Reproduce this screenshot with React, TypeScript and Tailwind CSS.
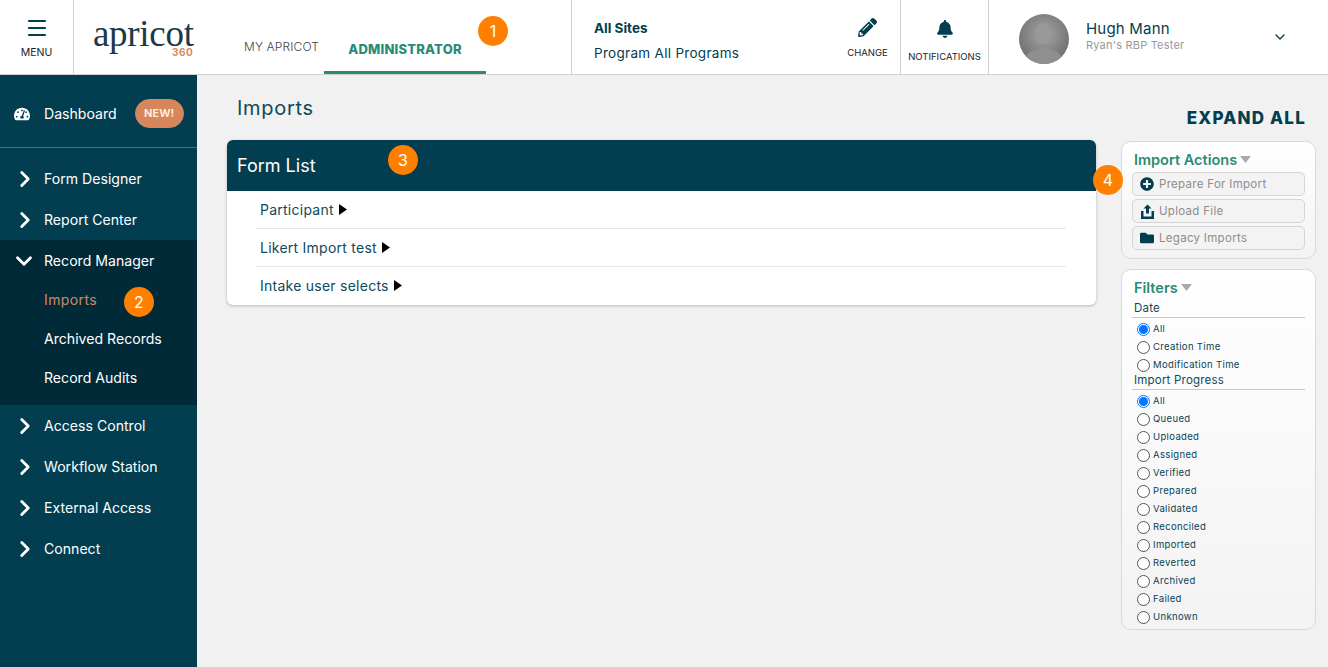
import React from "react";
import { ChevronRight, ChevronDown, Menu } from "lucide-react";
import { FaPencilAlt, FaBell, FaPlusCircle, FaFolder, FaTachometerAlt } from "react-icons/fa";

const Badge = ({ n, className }: { n: number; className: string }) => (
  <span className={`absolute flex h-[30px] w-[30px] items-center justify-center rounded-full bg-[#ff7f00] text-[16px] text-white ${className}`}>{n}</span>
);

const NavItem = ({ label, open }: { label: string; open?: boolean }) => (
  <div className="flex h-[41px] items-center text-[14.1px] text-white">
    <span className="flex w-[44px] justify-center pl-[6px]">
      {open ? <ChevronDown size={26} strokeWidth={2.6} className="-ml-[2px]" /> : <ChevronRight size={26} strokeWidth={2.6} />}
    </span>
    <span>{label}</span>
  </div>
);

const Radio = ({ label, checked }: { label: string; checked?: boolean }) => (
  <label className="flex h-[18px] items-center pl-[5px] text-[9.5px] tracking-[0.35px] text-[#0a4252]">
    <span className={`mr-[3px] flex h-[13px] w-[13px] items-center justify-center rounded-full border ${checked ? "border-[#0075ff]" : "border-[#555]"} bg-white`}>
      {checked && <span className="h-[9px] w-[9px] rounded-full bg-[#0075ff]" />}
    </span>
    {label}
  </label>
);

const ActionButton = ({ icon, label }: { icon: React.ReactNode; label: string }) => (
  <div className="flex h-[24px] items-center rounded-[5px] border border-[#d5d5d5] bg-[#f3f3f3] pl-[7px] text-[11.5px] tracking-[0.3px] text-[#8d8d8d]">
    <span className="flex w-[19px] items-center text-[#023e50]">{icon}</span>
    <span className="pt-[2px]">{label}</span>
  </div>
);

const Tri = ({ className }: { className: string }) => (
  <svg width="8" height="11" viewBox="0 0 8 11" className={className} fill="currentColor">
    <path d="M0 0l8 5.5L0 11z" />
  </svg>
);

const TriDown = () => (
  <svg width="11" height="7" viewBox="0 0 11 7" className="ml-[3px] text-[#aaa]" fill="currentColor">
    <path d="M0 0h11L5.5 7z" />
  </svg>
);

const FormRow = ({ label, last }: { label: string; last?: boolean }) => (
  <div className={`ml-[29px] mr-[30px] flex h-[38px] items-center pl-[4px] text-[14px] tracking-[0.25px] text-[#10495b] ${last ? "pb-[1px]" : "border-b border-[#e8e8e8]"}`}>
    {label}
    <Tri className="ml-[5px] text-black" />
  </div>
);

export default function App() {
  const font = { fontFamily: "Inter, 'Liberation Sans', sans-serif" };
  return (
    <div className="flex h-[667px] w-[1328px] flex-col overflow-hidden bg-[#f1f1f1] font-['Inter',sans-serif]" style={font}>
      <header className="relative flex h-[75px] shrink-0 border-b border-[#d2d2d2] bg-white">
        <div className="flex w-[74px] flex-col items-center border-r border-[#d2d2d2] pt-[16px] text-[#023e50]">
          <Menu size={24} strokeWidth={2.2} />
          <span className="mt-[5px] text-[10.5px] text-[#222]">MENU</span>
        </div>
        <div className="relative w-[170px] pl-[19px] pt-[22px] font-['Liberation_Serif',serif] text-[37px] leading-[24px] tracking-[-0.3px] text-[#1c3a45]">
          apricot
          <span className="absolute left-[98px] top-[46px] font-['Inter',sans-serif] text-[10px] font-bold leading-[12px] tracking-[0.5px] text-[#d88a62]">360</span>
        </div>
        <div className="flex h-[74px] w-[327px] items-end">
          <div className="w-[80px] pb-[18px] text-[12px] font-light tracking-[0.15px] text-[#444]">MY APRICOT</div>
          <div className="flex h-[37px] w-[162px] items-start justify-center border-b-[3px] border-[#2a8a78] pt-[3px] text-[13px] font-extrabold tracking-[0.2px] text-[#2a8a78]">ADMINISTRATOR</div>
          <Badge n={1} className="left-[478px] top-[16px]" />
        </div>
        <div className="flex w-[329px] border-l border-[#d2d2d2]">
          <div className="flex-1 pl-[22px] pt-[18px] text-[#023e50]">
            <div className="text-[13.5px] font-bold leading-[20px]">All Sites</div>
            <div className="mt-[5px] text-[13.5px] leading-[20px] tracking-[0.3px]">Program All Programs</div>
          </div>
          <div className="flex w-[65px] flex-col items-center pt-[18px] text-[#023e50]">
            <FaPencilAlt className="text-[19px]" />
            <span className="mt-[9px] text-[9.5px] text-[#222]">CHANGE</span>
          </div>
        </div>
        <div className="flex w-[88px] flex-col items-center border-l border-[#d2d2d2] pt-[20px] text-[#023e50]">
          <FaBell className="text-[18px]" />
          <span className="mt-[12px] text-[9.5px] text-[#222]">NOTIFICATIONS</span>
        </div>
        <div className="flex flex-1 items-start border-l border-[#d2d2d2] pl-[30px] pt-[14px]">
          <svg width="50" height="50" viewBox="0 0 50 50" className="shrink-0 rounded-full">
            <defs>
              <radialGradient id="av" cx="50%" cy="40%" r="65%">
                <stop offset="0%" stopColor="#a5a5a5" />
                <stop offset="100%" stopColor="#6a6a6a" />
              </radialGradient>
            </defs>
            <rect width="50" height="50" fill="url(#av)" />
            <ellipse cx="24" cy="20" rx="8" ry="11" fill="#999" />
            <path d="M4 50c1-10 8-13 15-15l2-5h7l2 5c7 2 14 5 16 15z" fill="#8f8f8f" />
          </svg>
          <div className="ml-[17px] w-[186px] pt-[5px]">
            <div className="text-[15px] leading-[20px] tracking-[0.2px] text-[#023e50]">Hugh Mann</div>
            <div className="text-[11px] leading-[13px] tracking-[0.2px] text-[#999]">Ryan's RBP Tester</div>
          </div>
          <ChevronDown size={16} strokeWidth={2} className="mt-[15px] text-[#023e50]" />
        </div>
      </header>

      <div className="flex min-h-0 flex-1">
        <aside className="relative w-[197px] shrink-0 bg-[#023e50]">
          <div className="flex h-[73px] items-center border-b border-[#4a6f7b] pl-[14px] pt-[5px] text-[14.1px] text-white">
            <FaTachometerAlt className="mr-[14px] text-[16px]" />
            <span>Dashboard</span>
            <span className="ml-[18px] flex h-[29px] w-[49px] items-center justify-center rounded-full border border-[#c98a68] bg-[#d8855c] text-[11px] font-bold text-[#fbeadf]">NEW!</span>
          </div>
          <div className="pt-[10px]">
            <NavItem label="Form Designer" />
            <NavItem label="Report Center" />
            <div className="relative bg-[#012a38] pb-[8px]">
              <NavItem label="Record Manager" open />
              <div className="-mt-[1px] flex h-[39px] items-center pl-[44px] text-[14px] tracking-[0.4px] text-[#c98a68]">Imports</div>
              <div className="flex h-[39px] items-center pl-[44px] text-[14.1px] text-white">Archived Records</div>
              <div className="flex h-[39px] items-center pl-[44px] text-[14.1px] text-white">Record Audits</div>
              <Badge n={2} className="left-[124px] top-[47px]" />
            </div>
            <NavItem label="Access Control" />
            <NavItem label="Workflow Station" />
            <NavItem label="External Access" />
            <NavItem label="Connect" />
          </div>
        </aside>

        <main className="flex min-w-0 flex-1">
          <div className="w-[924px] shrink-0 pl-[30px]">
            <h1 className="pl-[10px] pt-[21px] text-[20px] leading-[24px] tracking-[0.7px] text-[#10495b]">Imports</h1>
            <section className="relative mt-[20px] w-[869px] overflow-hidden rounded-[6px] bg-white shadow-[0_1px_3px_rgba(0,0,0,0.25)]">
              <div className="flex h-[51px] items-center bg-[#023e50] pl-[10px] text-[18px] text-white">Form List</div>
              <FormRow label="Participant" />
              <FormRow label="Likert Import test" />
              <FormRow label="Intake user selects" last />
              <Badge n={3} className="left-[161px] top-[5px]" />
            </section>
          </div>
          <div className="relative w-[195px] shrink-0 pt-[66px]">
            <div className="absolute right-[10px] top-[32px] whitespace-nowrap text-[17px] font-extrabold leading-[22px] tracking-[1.2px] text-[#023e50]">EXPAND ALL</div>
            <Badge n={4} className="-left-[28px] top-[90px]" />
            <div className="h-[118px] rounded-[10px] border border-[#d9d9d9] bg-gradient-to-b from-white to-[#f3f3f3] px-[10px] pt-[9px]">
              <div className="flex h-[17px] items-center pl-[2px] text-[14.5px] font-semibold text-[#2a8a78]">
                Import Actions
                <TriDown />
              </div>
              <div className="mt-[4px] flex flex-col gap-[3px]">
                <ActionButton icon={<FaPlusCircle className="text-[14px]" />} label="Prepare For Import" />
                <ActionButton
                  icon={
                    <svg width="15" height="15" viewBox="0 0 15 15" fill="currentColor">
                      <path d="M7.5 0.5l4 4H9v5H6v-5H3.5z" />
                      <path d="M1 7h2.5v5.5h8V7H14v8H1z" />
                    </svg>
                  }
                  label="Upload File"
                />
                <ActionButton icon={<FaFolder className="text-[14px]" />} label="Legacy Imports" />
              </div>
            </div>
            <div className="mt-[10px] h-[361px] rounded-[10px] border border-[#d9d9d9] bg-gradient-to-b from-white to-[#f3f3f3] px-[10px] pt-[9px]">
              <div className="flex h-[17px] items-center pl-[2px] text-[14.5px] font-semibold text-[#2a8a78]">
                Filters
                <TriDown />
              </div>
              <div className="mt-[4px] border-b border-[#c8c8c8] pb-[1px] pl-[2px] text-[11.5px] leading-[16px] tracking-[0.2px] text-[#10495b]">Date</div>
              <div className="pt-[2px]">
                <Radio label="All" checked />
                <Radio label="Creation Time" />
                <Radio label="Modification Time" />
              </div>
              <div className="-mt-[1px] border-b border-[#c8c8c8] pb-[1px] pl-[2px] text-[11.5px] leading-[15px] tracking-[0.2px] text-[#10495b]">Import Progress</div>
              <div className="pt-[2px]">
                <Radio label="All" checked />
                {["Queued", "Uploaded", "Assigned", "Verified", "Prepared", "Validated", "Reconciled", "Imported", "Reverted", "Archived", "Failed", "Unknown"].map((l) => (
                  <Radio key={l} label={l} />
                ))}
              </div>
            </div>
          </div>
        </main>
      </div>
    </div>
  );
}
